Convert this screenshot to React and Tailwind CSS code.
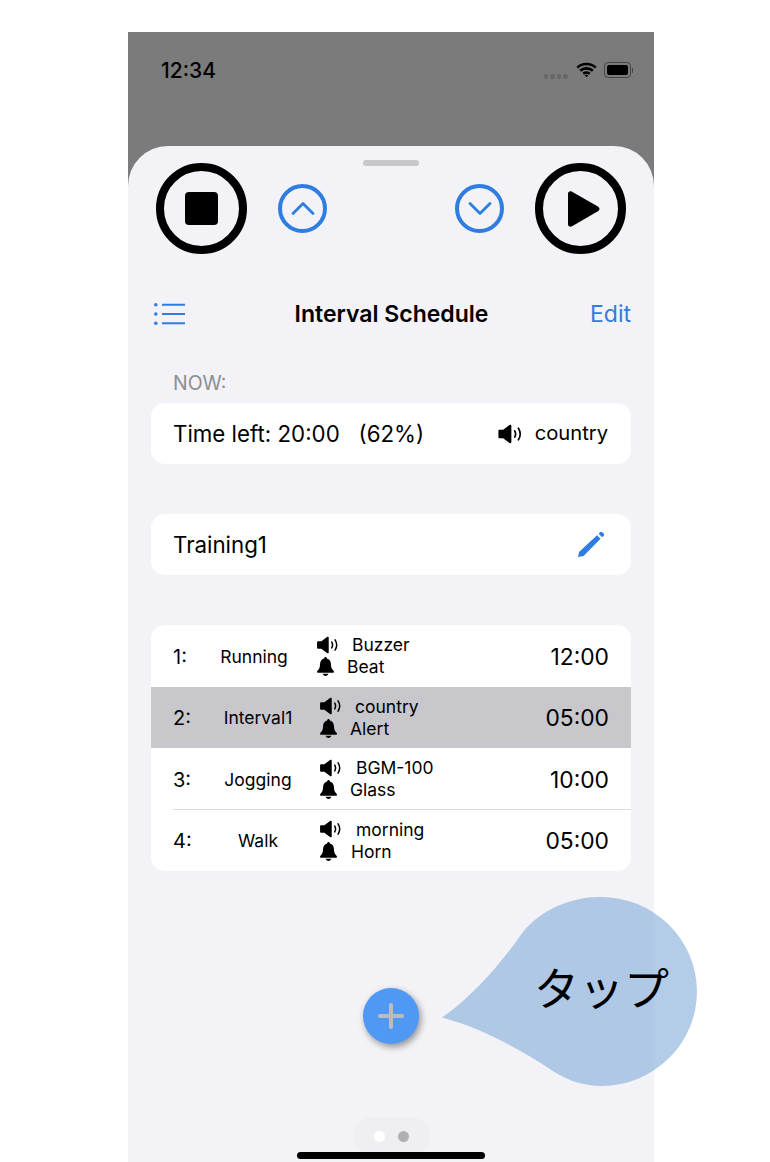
const steps = [
  { no: '1:', name: 'Running', nameCls: 'w-[96px] mr-[15px]', sound: 'Buzzer', alarm: 'Beat', soundGap: 'ml-[14px]', alarmGap: 'ml-[13px]', time: '12:00' },
  { no: '2:', name: 'Interval1', nameCls: 'w-[104px] mr-[10px]', sound: 'country', alarm: 'Alert', soundGap: 'ml-[14px]', alarmGap: 'ml-[13px]', time: '05:00', active: true },
  { no: '3:', name: 'Jogging', nameCls: 'w-[104px] mr-[10px]', sound: 'BGM-100', alarm: 'Glass', soundGap: 'ml-[15px]', alarmGap: 'ml-[13px]', time: '10:00' },
  { no: '4:', name: 'Walk', nameCls: 'w-[104px] mr-[10px]', sound: 'morning', alarm: 'Horn', soundGap: 'ml-[15px]', alarmGap: 'ml-[14px]', time: '05:00' },
];

function Speaker({ className }) {
  return (
    <svg viewBox="0 0 22 19" className={className}>
      <path d="M1 5.500h3.500L10.500 1c.8-.6 1.800-.2 1.800.8v15.400c0 1-1 1.400-1.800.8L4.500 13.500H1c-.6 0-1-.4-1-1v-6c0-.6.4-1 1-1z" fill="currentColor" />
      <path d="M15.500 6.500c1 1.800 1 4.200 0 6M19 4c2 3.200 2 7.800 0 11" fill="none" stroke="currentColor" strokeWidth="1.600" strokeLinecap="round" />
    </svg>
  );
}

function Bell({ className }) {
  return (
    <svg viewBox="0 0 18 20" className={className}>
      <path d="M9 0c.8 0 1.300.6 1.400 1.400 2.900.7 4.300 3 4.400 6.200.1 3.300.7 4.900 2.500 6.600.5.500.7.900.7 1.300 0 .7-.5 1.200-1.300 1.200H1.300C.5 16.700 0 16.200 0 15.500c0-.4.2-.8.7-1.300 1.800-1.700 2.400-3.300 2.500-6.600.1-3.200 1.500-5.500 4.400-6.200C7.700.6 8.200 0 9 0z" fill="currentColor" />
      <path d="M6 17.800h6c-.2 1.300-1.500 2.200-3 2.200s-2.800-.9-3-2.200z" fill="currentColor" />
    </svg>
  );
}

function StepRow({ step, divider }) {
  return (
    <div className={`relative h-[61.5px] flex items-center pl-[22px] pr-[22px] text-black ${step.active ? 'bg-[#c7c7cc]' : ''}`}>
      <span className="w-[33px] mt-[2px] text-[20px]">{step.no}</span>
      <span className={`mt-[2px] text-center text-[17.5px] ${step.nameCls}`}>{step.name}</span>
      <div className="flex flex-col gap-[1px] text-[17.5px] leading-[21px]">
        <div className="flex items-center">
          <Speaker className="w-[21px] h-[18px]" />
          <span className={step.soundGap}>{step.sound}</span>
        </div>
        <div className="flex items-center">
          <Bell className="w-[17px] h-[19px]" />
          <span className={step.alarmGap}>{step.alarm}</span>
        </div>
      </div>
      <span className="ml-auto mt-[2px] text-[22.8px]">{step.time}</span>
      {divider && <div className="absolute bottom-0 left-[22px] right-0 h-px bg-[#dcdcdf]" />}
    </div>
  );
}

export default function App() {
  return (
    <div className="relative w-[770px] h-[1162px] overflow-hidden bg-white pt-[32px] pl-[128px] font-['Inter','Noto_Sans_CJK_JP',sans-serif]">
      <div className="w-[526px] h-[1130px] bg-[#7b7b7b] flex flex-col">
        {/* Status bar */}
        <div className="h-[114px] shrink-0 flex items-start justify-between pt-[27px] pl-[33px] pr-[21px]">
          <span className="text-[21px] leading-[24px] font-medium text-black">12:34</span>
          <div className="flex items-center mt-[3px]">
            <div className="flex gap-[2px] mt-[12px] mr-[8px]">
              <span className="w-[4.500px] h-[4.500px] rounded-full bg-[#666666]" />
              <span className="w-[4.500px] h-[4.500px] rounded-full bg-[#666666]" />
              <span className="w-[4.500px] h-[4.500px] rounded-full bg-[#666666]" />
              <span className="w-[4.500px] h-[4.500px] rounded-full bg-[#666666]" />
            </div>
            <svg viewBox="0 0 20 15" className="w-[21px] h-[16px] mr-[7px]">
              <path d="M1.200 5.200C6 .7 14 .7 18.800 5.200M4 8.200c3.300-3 8.700-3 12 0M6.900 11c1.800-1.300 4.400-1.300 6.200 0" fill="none" stroke="black" strokeWidth="2.400" />
              <path d="M8.400 12.400L10 14.500l1.600-2.100c-1-.6-2.200-.6-3.200 0z" fill="black" />
            </svg>
            <div className="w-[27px] h-[16px] rounded-[4px] border border-[#444444] p-[2px]">
              <div className="w-full h-full rounded-[2px] bg-black" />
            </div>
            <div className="w-[1.500px] h-[5px] ml-[1px] rounded-r-full bg-[#444444]" />
          </div>
        </div>

        {/* Sheet */}
        <div className="relative flex-1 bg-[#f2f2f7] rounded-t-[40px] flex flex-col">
          <div className="self-center w-[56px] h-[6px] mt-[14px] rounded-full bg-[#c7c7cc]" />

          {/* Transport buttons */}
          <div className="flex items-center mt-[-3px] pl-[28px] pr-[28px]">
            <div className="w-[91px] h-[91px] rounded-full border-[8px] border-black flex items-center justify-center">
              <div className="w-[33px] h-[33px] rounded-[4px] bg-black" />
            </div>
            <div className="w-[49px] h-[49px] ml-[31px] rounded-full border-[4px] border-[#2f7de1] flex items-center justify-center">
              <svg viewBox="0 0 24 15" className="w-[24px] h-[15px] text-[#2f7de1]">
                <path d="M2 12.500L12 2.500l10 10" fill="none" stroke="currentColor" strokeWidth="2.800" strokeLinecap="round" strokeLinejoin="round" />
              </svg>
            </div>
            <div className="w-[49px] h-[49px] ml-auto mr-[31px] rounded-full border-[4px] border-[#2f7de1] flex items-center justify-center">
              <svg viewBox="0 0 24 15" className="w-[24px] h-[15px] text-[#2f7de1]">
                <path d="M2 2.500l10 10 10-10" fill="none" stroke="currentColor" strokeWidth="2.800" strokeLinecap="round" strokeLinejoin="round" />
              </svg>
            </div>
            <div className="w-[91px] h-[91px] rounded-full border-[8px] border-black flex items-center justify-center">
              <svg viewBox="0 0 33 37" className="w-[32px] h-[36px] ml-[6px]">
                <path d="M0 3c0-2.500 2-3.600 4.200-2.400l26.600 15.200c2.200 1.300 2.200 3.800 0 5.100L4.200 36.400C2 37.600 0 36.500 0 34z" fill="black" />
              </svg>
            </div>
          </div>

          {/* Title bar */}
          <div className="flex items-center justify-between h-[32px] mt-[44px] pl-[26px] pr-[23px]">
            <svg viewBox="0 0 31 22" className="w-[31px] h-[22px] text-[#2f7de1]">
              <circle cx="1.800" cy="1.800" r="1.800" fill="currentColor" />
              <circle cx="1.800" cy="11" r="1.800" fill="currentColor" />
              <circle cx="1.800" cy="20.200" r="1.800" fill="currentColor" />
              <path d="M8 1.800h23M8 11h23M8 20.200h23" stroke="currentColor" strokeWidth="2" />
            </svg>
            <span className="ml-[8px] text-[23px] font-semibold text-black">Interval Schedule</span>
            <span className="text-[23px] text-[#2f7de1]">Edit</span>
          </div>

          <span className="mt-[41px] ml-[45px] text-[19.500px] leading-[24px] text-[#8e8e93]">NOW:</span>

          {/* Now card */}
          <div className="mt-[8px] mx-[23px] h-[61px] rounded-[14px] bg-white flex items-center pl-[22px] pr-[23px] text-black">
            <span className="text-[22.300px] whitespace-pre">Time left: 20:00   (62%)</span>
            <Speaker className="ml-auto w-[24px] h-[20px]" />
            <span className="ml-[13px] text-[20.200px]">country</span>
          </div>

          {/* Name card */}
          <div className="mt-[50px] mx-[23px] h-[61px] rounded-[14px] bg-white flex items-center justify-between pl-[22px] pr-[26px] text-black">
            <span className="text-[22.300px]">Training1</span>
            <svg viewBox="0 0 28 28" className="w-[27px] h-[27px] text-[#2f7de1]">
              <path d="M0 27l1.300-5.600L19.800 4.400l3.600 3.600L5.800 25.800z" fill="currentColor" />
              <path d="M21.400 2.800l1.500-1.500c.7-.7 1.700-.7 2.300 0l1.400 1.400c.7.600.7 1.600 0 2.300L25 6.400z" fill="currentColor" />
            </svg>
          </div>

          {/* Steps */}
          <div className="mt-[50px] mx-[23px] rounded-[14px] bg-white overflow-hidden">
            {steps.map((step, i) => (
              <StepRow key={step.no} step={step} divider={i === 2} />
            ))}
          </div>

          {/* Add button */}
          <div className="self-center mt-[117px] w-[56px] h-[56px] rounded-full bg-[#4f98f4] shadow-[2px_3px_7px_rgba(0,0,0,0.4)] flex items-center justify-center">
            <svg viewBox="0 0 26 26" className="w-[26px] h-[26px]">
              <path d="M13 2v22M2 13h22" stroke="#bcbcc0" strokeWidth="4" strokeLinecap="round" />
            </svg>
          </div>

          {/* Page dots */}
          <div className="self-center mt-[73px] w-[77px] h-[38px] rounded-full bg-[#efeff3] flex items-center justify-center gap-[13px]">
            <span className="w-[11px] h-[11px] rounded-full bg-white" />
            <span className="w-[11px] h-[11px] rounded-full bg-[#b0b0b2]" />
          </div>

          <div className="absolute left-[169px] bottom-[3px] w-[188px] h-[7px] rounded-full bg-black" />
        </div>
      </div>

      {/* Callout */}
      <svg viewBox="0 0 770 1162" className="absolute inset-0 w-[770px] h-[1162px] pointer-events-none">
        <path
          d="M442 1017.500C475 995 505 958 523 932C541 910 570 897 600 897A96 94.500 0 0 1 602 1086C580 1086 562 1078 547 1067C520 1050 480 1027 442 1017.500Z"
          fill="#80acda"
          fillOpacity="0.6"
        />
      </svg>
      <span className="absolute left-[534px] top-[955px] text-[45px] leading-[64px] text-black font-['Noto_Sans_CJK_JP',sans-serif]">タップ</span>
    </div>
  );
}
